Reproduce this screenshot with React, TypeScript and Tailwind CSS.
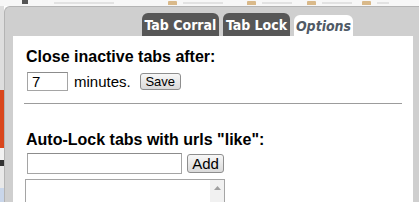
import React from "react";

function TopStrip() {
  // bookmarks bar of the browser, cut off by the popup
  return (
    <div className="flex h-[6px] items-start bg-[#f7f7f7]">
      <div className="ml-[22px] h-[4px] w-[6px] bg-[#555]" />
      <div className="ml-[26px] mt-[2px] h-[2px] w-[60px] bg-[#e2e2e2]" />
      <div className="ml-[54px] mt-[1px] h-[4px] w-[9px] rounded-t-[1px] bg-[#d9b98a]" />
      <div className="ml-[6px] mt-[2px] h-[2px] w-[40px] bg-[#e2e2e2]" />
      <div className="ml-[24px] mt-[1px] h-[4px] w-[9px] rounded-t-[1px] bg-[#d9b98a]" />
      <div className="ml-[6px] mt-[2px] h-[2px] w-[30px] bg-[#e2e2e2]" />
      <div className="ml-[15px] mt-[1px] h-[4px] w-[9px] rounded-t-[1px] bg-[#d9b98a]" />
      <div className="ml-[6px] mt-[2px] h-[2px] w-[30px] bg-[#e2e2e2]" />
      <div className="ml-[10px] mt-[1px] h-[4px] w-[9px] rounded-t-[1px] bg-[#d9b98a]" />
      <div className="ml-[6px] mt-[2px] h-[2px] w-[12px] bg-[#e2e2e2]" />
    </div>
  );
}

function LeftStrip() {
  // the page behind the popup
  return (
    <div className="flex w-[4px] flex-col">
      <div className="h-[84px] bg-[#dedede]" />
      <div className="h-[58px] bg-[#d9461c]" />
      <div className="h-[12px] bg-[#f2f2f2]" />
      <div className="h-[6px] bg-[#333]" />
      <div className="h-[22px] bg-[#e9e9e9]" />
      <div className="flex-1 bg-[#c9d6ea]" />
    </div>
  );
}

function Tab({ label, width, active }: { label: string; width: string; active?: boolean }) {
  if (active) {
    return (
      <div
        className={`${width} flex h-[21px] items-center justify-center rounded-t-[6px] bg-white pt-[1px] font-['DejaVu_Sans_Condensed','DejaVu_Sans',sans-serif] text-[14px] font-bold italic text-[#505a66] [font-stretch:condensed]`}
      >
        {label}
      </div>
    );
  }
  return (
    <div
      className={`${width} flex h-[23px] items-center justify-center rounded-t-[6px] bg-[#575757] pt-[2px] font-['DejaVu_Sans_Condensed','DejaVu_Sans',sans-serif] text-[14px] font-bold text-white [font-stretch:condensed]`}
    >
      {label}
    </div>
  );
}

function Popup() {
  return (
    <div className="flex flex-1 flex-col rounded-tl-[6px] border-l border-t border-[#b4b4b4] bg-[#cfcfcf] pl-[8px] pr-[6px] pt-[6px]">
      <div className="flex items-end gap-[4px] pl-[129px]">
        <Tab label="Tab Corral" width="w-[77px]" />
        <Tab label="Tab Lock" width="w-[67px]" />
        <Tab label="Options" width="w-[59px]" active />
      </div>

      <div className="flex flex-1 flex-col bg-white pl-[13px] pr-[11px] pt-[12px] text-black">
        <div className="text-[16px] font-bold leading-[18px]">Close inactive tabs after:</div>
        <div className="mt-[6px] flex items-center">
          <div className="ml-[1px] flex h-[19px] w-[41px] items-center border border-[#a5a5a5] border-t-[#8c8c8c] pl-[4px] text-[15px] leading-none">
            7
          </div>
          <span className="ml-[6px] text-[15px] leading-[19px]">minutes.</span>
          <button className="ml-[9px] flex h-[17px] w-[41px] items-center justify-center rounded-[3px] border border-[#8e8e8e] bg-gradient-to-b from-[#f7f7f7] to-[#dadada] text-[13px] leading-none">
            Save
          </button>
        </div>

        <div className="-ml-[2px] mt-[12px] h-px bg-[#9c9c9c]" />

        <div className="mt-[27px] text-[16px] font-bold leading-[18px]">Auto-Lock tabs with urls "like":</div>
        <div className="mt-[4px] flex items-center">
          <div className="ml-[1px] h-[21px] w-[155px] border border-[#a5a5a5] border-t-[#8c8c8c]" />
          <button className="ml-[5px] flex h-[19px] w-[37px] items-center justify-center rounded-[3px] border border-[#8e8e8e] bg-gradient-to-b from-[#f7f7f7] to-[#dadada] text-[15px] leading-none">
            Add
          </button>
        </div>
        <div className="-ml-[1px] mt-[5px] flex h-[40px] w-[200px] border border-[#a5a5a5]">
          <div className="flex-1" />
          <div className="flex w-[14px] justify-center bg-[#f1f1f1] pt-[6px]">
            <svg width="7" height="4" viewBox="0 0 7 4">
              <path d="M0 4 L3.5 0 L7 4 Z" fill="#a0a0a0" />
            </svg>
          </div>
        </div>
      </div>
    </div>
  );
}

export default function App() {
  return (
    <div className="flex h-[202px] w-[419px] flex-col overflow-hidden bg-white font-['Liberation_Sans',Arial,sans-serif]">
      <TopStrip />
      <div className="flex min-h-0 flex-1">
        <LeftStrip />
        <Popup />
      </div>
    </div>
  );
}
